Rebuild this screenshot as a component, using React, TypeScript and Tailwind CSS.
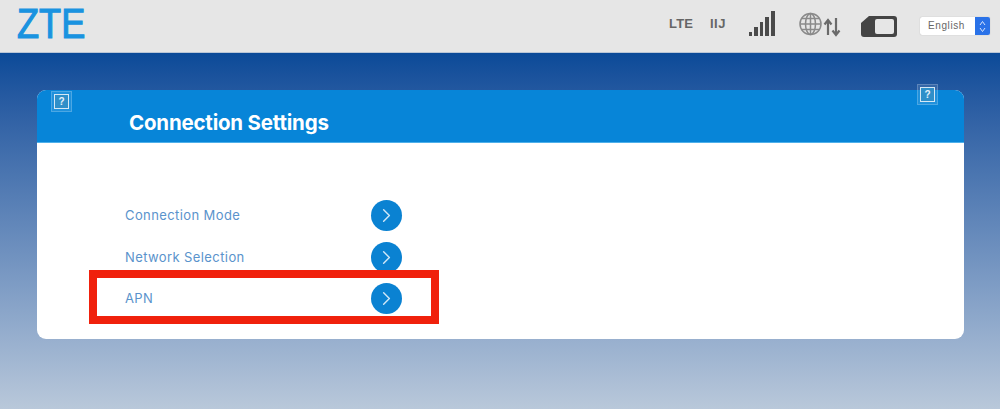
import { ChevronRight } from "lucide-react";

const rows = ["Connection Mode", "Network Selection", "APN"];

function HelpIcon({ className }: { className: string }) {
  return (
    <div
      className={`absolute w-[21px] h-[21px] border border-white/20 bg-white/10 flex items-center justify-center ${className}`}
    >
      <div className="w-[15px] h-[15px] border border-[#d5e8f5] bg-[#2f8fc9] text-[#e4f1fa] text-[10px] leading-[13px] font-bold text-center">
        ?
      </div>
    </div>
  );
}

function SignalBars() {
  const heights = [4, 9, 14, 19, 25];
  return (
    <div className="flex items-end gap-[2px] h-[25px] w-[26px]">
      {heights.map((h, i) => (
        <div
          key={i}
          className={`bg-[#4a4a4a] ${i === 0 ? "w-[3px]" : "w-[4px]"}`}
          style={{ height: h }}
        />
      ))}
    </div>
  );
}

function GlobeIcon() {
  return (
    <svg width="42" height="26" viewBox="0 0 42 26" fill="none">
      <g stroke="#8a8a8a" strokeWidth="1.500">
        <circle cx="11.500" cy="13" r="10.500" />
        <ellipse cx="11.500" cy="13" rx="5" ry="10.500" />
        <path d="M11.500 2.500v21M1 13h21M2.500 7.500h18M2.500 18.500h18" />
      </g>
      <g stroke="#6a6a6a" strokeWidth="2.200">
        <path d="M29 24V10M25.500 13.500L29 9l3.500 4.500" />
        <path d="M37 7v16M33.500 19.500L37 24l3.500-4.500" />
      </g>
    </svg>
  );
}

function BatteryIcon() {
  return (
    <svg width="38" height="23" viewBox="0 0 38 23">
      <path
        d="M9 1h25a3 3 0 0 1 3 3v15a3 3 0 0 1-3 3H4a3 3 0 0 1-3-3V8z"
        fill="#444444"
      />
      <rect x="15" y="4" width="19" height="15" rx="2" fill="#e6e6e6" />
    </svg>
  );
}

function LangSelect() {
  return (
    <div className="flex h-[18px] w-[70px] rounded-[2px] overflow-hidden bg-white shadow-[0_0_1px_rgba(0,0,0,0.3)]">
      <div className="flex-1 pl-[8px] text-[10px] leading-[18px] tracking-[0.6px] text-[#666666] font-normal">
        English
      </div>
      <div className="w-[15px] bg-[#2a72e8] flex items-center justify-center">
        <svg width="7" height="13" viewBox="0 0 7 13" fill="none" stroke="#d5e4fb" strokeWidth="1">
          <path d="M1 5l2.500-3.500L6 5M1 8l2.500 3.500L6 8" />
        </svg>
      </div>
    </div>
  );
}

export default function App() {
  return (
    <div className="w-[1000px] h-[409px] overflow-hidden flex flex-col font-['Liberation_Sans',Arial,sans-serif]">
      {/* Top bar */}
      <header className="h-[53px] shrink-0 bg-[#e6e6e6] flex items-center pl-[17px] border-b border-[#b9c6d6]">
        <div className="text-[#1a93e0] text-[42px] leading-[48px] scale-x-[0.86] origin-left mb-[4px] [-webkit-text-stroke:1.200px_#1a93e0]">
          ZTE
        </div>
        <div className="ml-auto flex items-center text-[#666666] font-bold">
          <span className="text-[13px] w-[26px] -mt-[4px] ml-[-1px] tracking-[0.2px]">LTE</span>
          <span className="text-[13px] ml-[15px] w-[16px] tracking-[0.5px] -mt-[4px]">IIJ</span>
          <div className="ml-[23px] -mt-[5px]">
            <SignalBars />
          </div>
          <div className="ml-[24px] -mt-[4px]">
            <GlobeIcon />
          </div>
          <div className="ml-[19px] mt-[1px]">
            <BatteryIcon />
          </div>
          <div className="ml-[22px] mr-[10px]">
            <LangSelect />
          </div>
        </div>
      </header>

      {/* Main */}
      <main className="relative flex-1 bg-gradient-to-b from-[#0a4a98] to-[#b9c8da] pt-[37px] pl-[37px]">
        <div className="relative w-[927px] h-[249px] rounded-[9px] bg-white overflow-hidden">
          <div className="h-[53px] bg-[#0785d8] border-b border-[#4fb0ea] pl-[92px] pt-[20px] text-white text-[20.500px] leading-[26px] font-bold font-['Inter',sans-serif] tracking-[-0.2px]">
            Connection Settings
          </div>
          <ul className="pt-[52px] pl-[88px]">
            {rows.map((label) => (
              <li key={label} className="h-[41.500px] flex items-center">
                <span className="w-[246px] text-[13px] text-[#5a93cc] font-['Inter',sans-serif] tracking-[0.4px]">
                  {label}
                </span>
                <span className="w-[31px] h-[31px] rounded-full bg-[#0a82d2] flex items-center justify-center">
                  <ChevronRight size={23} strokeWidth={1.500} className="text-[#cfe6f6]" />
                </span>
              </li>
            ))}
          </ul>
        </div>

        {/* Overlays */}
        <HelpIcon className="left-[51px] top-[38px]" />
        <HelpIcon className="left-[917px] top-[31px]" />
        <div className="absolute left-[89px] top-[217px] w-[350px] h-[54px] border-[8px] border-[#f0210c]" />
      </main>
    </div>
  );
}
